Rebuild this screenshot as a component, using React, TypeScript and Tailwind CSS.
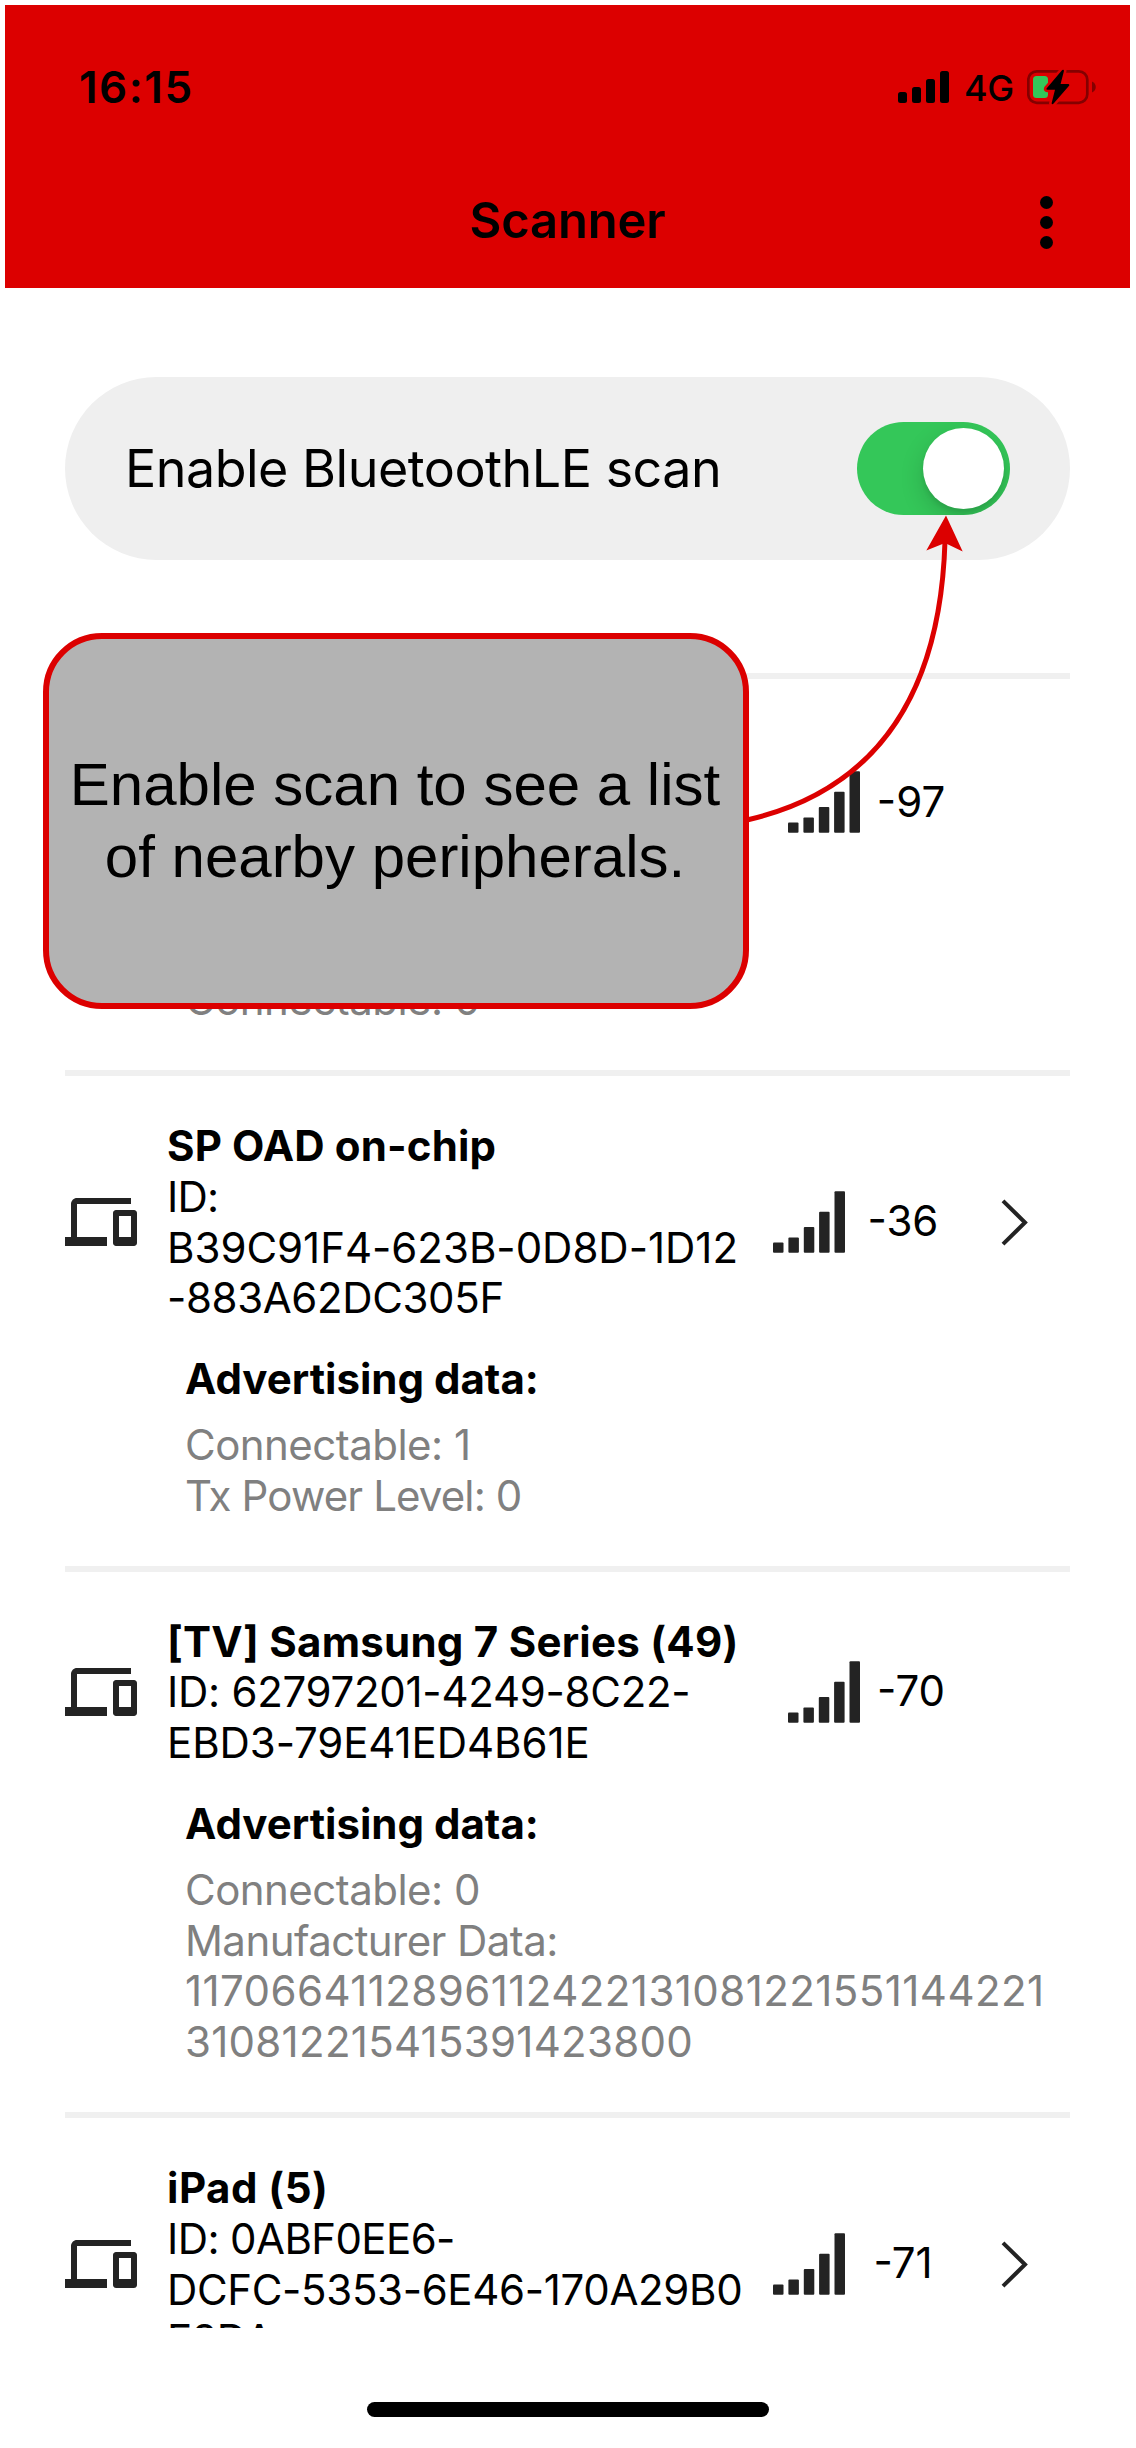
type Line = { text: string; tracking: string };

type Device = {
  name: Line;
  id: Line[];
  rssi: string;
  chevron: boolean;
  padding: string;
  data: Line[];
};

const devices: Device[] = [
  {
    name: { text: '\u00a0', tracking: 'tracking-normal' },
    id: [
      { text: '\u00a0', tracking: 'tracking-normal' },
      { text: '\u00a0', tracking: 'tracking-normal' },
    ],
    rssi: '-97',
    chevron: false,
    padding: 'pt-[47px]',
    data: [{ text: 'Connectable: 0', tracking: 'tracking-[-0.53px]' }],
  },
  {
    name: { text: 'SP OAD on-chip', tracking: 'tracking-[0.14px]' },
    id: [
      { text: 'ID:', tracking: 'tracking-[-0.8px]' },
      { text: 'B39C91F4-623B-0D8D-1D12', tracking: 'tracking-[-0.02px]' },
      { text: '-883A62DC305F', tracking: 'tracking-[-0.37px]' },
    ],
    rssi: '-36',
    chevron: true,
    padding: 'pt-[44px]',
    data: [
      { text: 'Connectable: 1', tracking: 'tracking-[-0.53px]' },
      { text: 'Tx Power Level: 0', tracking: 'tracking-[-0.87px]' },
    ],
  },
  {
    name: { text: '[TV] Samsung 7 Series (49)', tracking: 'tracking-[0.25px]' },
    id: [
      { text: 'ID: 62797201-4249-8C22-', tracking: 'tracking-[-0.28px]' },
      { text: 'EBD3-79E41ED4B61E', tracking: 'tracking-[-0.08px]' },
    ],
    rssi: '-70',
    chevron: false,
    padding: 'pt-[44px]',
    data: [
      { text: 'Connectable: 0', tracking: 'tracking-[-0.53px]' },
      { text: 'Manufacturer Data:', tracking: 'tracking-[-0.57px]' },
      { text: '1170664112896112422131081221551144221', tracking: 'tracking-[0.44px]' },
      { text: '310812215415391423800', tracking: 'tracking-[0.28px]' },
    ],
  },
  {
    name: { text: 'iPad (5)', tracking: 'tracking-[0.5px]' },
    id: [
      { text: 'ID: 0ABF0EE6-', tracking: 'tracking-[-0.6px]' },
      { text: 'DCFC-5353-6E46-170A29B0', tracking: 'tracking-[-0.34px]' },
      { text: 'E8DA', tracking: 'tracking-[-0.8px]' },
    ],
    rssi: '-71',
    chevron: true,
    padding: 'pt-[44px]',
    data: [],
  },
];

function DevicesIcon() {
  return (
    <svg className="size-[72px] shrink-0" viewBox="0 0 24 24" fill="#232323">
      <path d="M4 6h18V4H4c-1.1 0-2 .9-2 2v11H0v3h14v-3H4V6zm19 2h-6c-.55 0-1 .45-1 1v10c0 .55.45 1 1 1h6c.55 0 1-.45 1-1V9c0-.55-.45-1-1-1zm-1 9h-4v-7h4v7z" />
    </svg>
  );
}

function SignalIcon() {
  return (
    <svg className="h-[62px] w-[72px] shrink-0" viewBox="0 0 72 62" fill="#232323">
      <rect x="0" y="51.5" width="10.5" height="10.3" rx="1" />
      <rect x="15.4" y="46.5" width="10.5" height="15.3" rx="1" />
      <rect x="30.8" y="36" width="10.5" height="25.8" rx="1" />
      <rect x="46.1" y="20.7" width="10.5" height="41.1" rx="1" />
      <rect x="61.5" y="0.2" width="10.5" height="61.6" rx="1" />
    </svg>
  );
}

function Chevron() {
  return (
    <svg className="ml-[40px] h-[48px] w-[28px] shrink-0" viewBox="0 0 28 48" fill="none" stroke="#232323" strokeWidth="4">
      <path d="M2 2.8 L24 24.5 L2 46.2" />
    </svg>
  );
}

function StatusBar() {
  return (
    <div className="flex h-[164px] items-center pl-[74px] pr-[34px]">
      <span className="text-[44px] font-semibold leading-[54px] tracking-[1.5px]">16:15</span>
      <svg className="ml-auto h-[32px] w-[51px]" viewBox="0 0 51 32">
        <rect x="0" y="21" width="9" height="11" rx="2.5" />
        <rect x="14" y="16" width="9" height="16" rx="2.5" />
        <rect x="28" y="8" width="9" height="24" rx="2.5" />
        <rect x="42" y="0" width="9" height="32" rx="2.5" />
      </svg>
      <span className="ml-[15px] mt-[2px] w-[63px] text-[36px] font-medium leading-[44px] tracking-[-0.5px]">4G</span>
      <svg className="h-[36px] w-[69px]" viewBox="0 0 69 36">
        <rect x="1.3" y="2.3" width="59" height="31.5" rx="8.5" fill="none" stroke="#840000" strokeWidth="2.7" />
        <path d="M65 12.5c5 2 5 9 0 11z" fill="#840000" />
        <rect x="6" y="7" width="15" height="22" rx="3.5" fill="#34c759" />
        <path
          d="M35.2 1 L19.5 19.4 Q19 20.6 20.4 20.8 H28 L24.6 34.2 Q25 36 26.6 34.6 L42.3 16.6 Q42.6 15.2 41.4 15 H33.6 L37 1.8 Q36.8 0 35.2 1Z"
          fill="#000"
          stroke="#dc0000"
          strokeWidth="5"
          paintOrder="stroke"
        />
      </svg>
    </div>
  );
}

function TitleBar() {
  return (
    <div className="grid h-[104px] grid-cols-[1fr_auto_1fr] items-center">
      <span />
      <h1 className="text-[49px] font-semibold leading-[60px] tracking-[-0.2px]">Scanner</h1>
      <div className="mr-[77px] mt-[2px] flex flex-col gap-[7px] justify-self-end">
        <i className="size-[13px] rounded-full bg-black" />
        <i className="size-[13px] rounded-full bg-black" />
        <i className="size-[13px] rounded-full bg-black" />
      </div>
    </div>
  );
}

function Toggle() {
  return (
    <div className="flex h-[93px] w-[153px] items-center justify-end overflow-hidden rounded-full bg-[#34c759] pr-[6px]">
      <div className="size-[81px] rounded-full bg-white shadow-[0_9px_24px_rgba(0,0,0,0.16),0_4px_4px_rgba(0,0,0,0.08)]" />
    </div>
  );
}

function Callout() {
  return (
    <div className="absolute left-[42.5px] top-[632.5px] flex h-[376.5px] w-[706px] items-center justify-center rounded-[59px] border-[6px] border-[#dc0000] bg-[#b3b3b3] text-center font-['Liberation_Sans',sans-serif] text-[60px] leading-[72px]">
      <p className="-ml-px whitespace-nowrap">
        Enable scan to see a list
        <br />
        of nearby peripherals.
      </p>
    </div>
  );
}

function Arrow() {
  return (
    <svg className="absolute left-[740px] top-[510px] h-[320px] w-[240px]" viewBox="740 510 240 320">
      <path d="M747 820 Q938 776 945 541" fill="none" stroke="#dc0000" strokeWidth="5" />
      <path d="M946 515.5 L962.7 551.5 L945 543 L926.3 550.5 Z" fill="#dc0000" />
    </svg>
  );
}

function DeviceRow({ device }: { device: Device }) {
  return (
    <section className={`text-[42px] leading-[50.8px] ${device.padding}`}>
      <div className="flex items-center">
        <DevicesIcon />
        <div
          className={`ml-[30px] shrink-0 translate-y-px whitespace-nowrap ${device.chevron ? 'w-[606px]' : 'w-[621px]'}`}
        >
          <h2 className={`font-bold ${device.name.tracking}`}>{device.name.text}</h2>
          {device.id.map((line, index) => (
            <p key={index} className={line.tracking}>
              {line.text}
            </p>
          ))}
        </div>
        <SignalIcon />
        <span className={`shrink-0 text-center ${device.chevron ? 'w-[116px]' : 'w-[102px]'}`}>{device.rssi}</span>
        {device.chevron && <Chevron />}
      </div>
      <div className="ml-[120px] mt-[31px] whitespace-nowrap pb-[44px]">
        <h3 className="mb-[15px] font-bold">Advertising data:</h3>
        {device.data.map((line, index) => (
          <p key={index} className={`text-[#808080] ${line.tracking}`}>
            {line.text}
          </p>
        ))}
      </div>
    </section>
  );
}

export default function App() {
  return (
    <div className="relative h-[2448px] w-[1136px] overflow-hidden bg-white font-['Inter',sans-serif] text-black">
      <header className="ml-[5px] mt-[5px] h-[283px] w-[1125px] bg-[#dc0000]">
        <StatusBar />
        <TitleBar />
      </header>
      <main className="ml-[65px] h-[2040px] w-[1005px] overflow-hidden pt-[89px]">
        <div className="flex h-[183px] items-center justify-between rounded-full bg-[#efefef] pl-[60px] pr-[60px]">
          <span className="text-[52px] leading-[64px] tracking-[-0.5px]">Enable BluetoothLE scan</span>
          <Toggle />
        </div>
        <div className="mt-[113px]">
          {devices.map((device) => (
            <div key={device.rssi} className="border-t-[6px] border-[#f0f0f0]">
              <DeviceRow device={device} />
            </div>
          ))}
        </div>
      </main>
      <div className="mx-auto mt-[74px] h-[15px] w-[402px] rounded-full bg-black" />
      <Callout />
      <Arrow />
    </div>
  );
}
